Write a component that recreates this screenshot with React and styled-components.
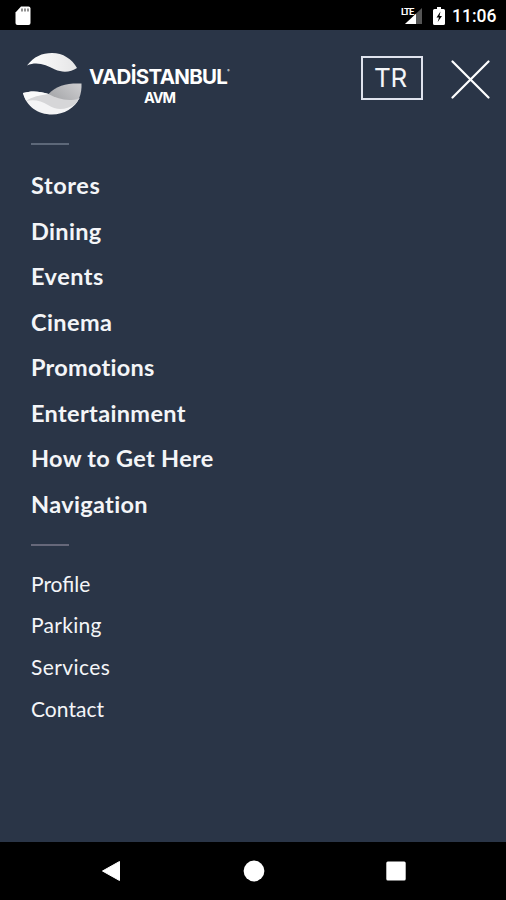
import React from 'react';
import styled, { createGlobalStyle } from 'styled-components';

const GlobalStyle = createGlobalStyle`
    body {
        margin: 0;
        background: #2a3547;
    }

    * {
        box-sizing: border-box;
    }
`;

const Screen = styled.div`
    display: flex;
    flex-direction: column;
    width: 506px;
    height: 900px;
    background: #2a3547;
    color: #f4f5f8;
    font-family: Lato, "Open Sans", sans-serif;
`;

const StatusBar = styled.div`
    display: flex;
    align-items: center;
    height: 30px;
    padding: 1px 9px 0 14px;
    background: #000;
    color: #fff;
`;

const StatusIcons = styled.div`
    display: flex;
    align-items: center;
    gap: 10px;
    margin-left: auto;
`;

const Clock = styled.span`
    width: 45px;
    margin-left: -3px;
    font-family: Roboto, sans-serif;
    font-size: 17.5px;
    font-weight: 500;
    line-height: 28px;
    white-space: nowrap;
`;

const Header = styled.header`
    display: flex;
    align-items: flex-start;
    height: 113px;
    padding: 22px 16px 0 22px;
`;

const Brand = styled.div`
    display: flex;
    align-items: flex-start;
`;

const BrandName = styled.div`
    display: flex;
    flex-direction: column;
    width: 142px;
    margin: 13px 0 0 7px;
    color: #fff;
    font-family: Inter, sans-serif;
    font-weight: 700;
`;

const BrandTitle = styled.span`
    font-size: 20.5px;
    line-height: 24px;
    letter-spacing: -0.7px;
    white-space: nowrap;
`;

const BrandMark = styled.sup`
    font-size: 3.5px;
    line-height: 0;
    vertical-align: 12px;
`;

const BrandSub = styled.span`
    padding-right: 1px;
    font-size: 14.5px;
    line-height: 17px;
    letter-spacing: -1px;
    text-align: center;
`;

const HeaderActions = styled.div`
    display: flex;
    align-items: flex-start;
    gap: 28px;
    margin: 4px 0 0 auto;
`;

const LanguageButton = styled.button`
    display: flex;
    align-items: center;
    justify-content: center;
    width: 62px;
    height: 44px;
    padding: 0 3px 2px 0;
    border: 2px solid #dfe3ee;
    background: none;
    color: #f4f5f8;
    font-family: Inter, sans-serif;
    font-size: 26px;
    letter-spacing: -0.3px;
`;

const CloseButton = styled.button`
    display: flex;
    margin-top: 4px;
    padding: 0;
    border: 0;
    background: none;
`;

const Divider = styled.hr`
    width: 38px;
    height: 2px;
    margin: 0 0 0 31px;
    border: 0;
    background: ${props => props.$color};
`;

const Menu = styled.nav`
    display: flex;
    flex-direction: column;
    align-items: flex-start;
    padding: ${props => props.$padding};
`;

const MainLink = styled.a`
    height: 45.57px;
    font-size: 23.5px;
    font-weight: 700;
    line-height: 45.57px;
    letter-spacing: ${props => props.$spacing}px;
`;

const SubLink = styled.a`
    height: 41.9px;
    font-size: 21px;
    line-height: 41.9px;
    letter-spacing: ${props => props.$spacing}px;
`;

const NavigationBar = styled.footer`
    display: flex;
    align-items: center;
    justify-content: space-between;
    height: 58px;
    margin-top: auto;
    padding: 0 100px 0 101px;
    background: #000;
`;

const mainLinks = [
    { label: 'Stores', spacing: 0.6 },
    { label: 'Dining', spacing: 0.35 },
    { label: 'Events', spacing: 0.5 },
    { label: 'Cinema', spacing: 0.4 },
    { label: 'Promotions', spacing: 0.25 },
    { label: 'Entertainment', spacing: 0.35 },
    { label: 'How to Get Here', spacing: 0.3 },
    { label: 'Navigation', spacing: 0.35 },
];

const subLinks = [
    { label: 'Profile', spacing: 0 },
    { label: 'Parking', spacing: 0.3 },
    { label: 'Services', spacing: 0.4 },
    { label: 'Contact', spacing: 0.05 },
];

const SdCardIcon = () => (
    <svg width="18" height="20" viewBox="0 0 18 20">
        <path d="M7 0.500h7.500a2 2 0 0 1 2 2v14.500a2 2 0 0 1-2 2H3.500a2 2 0 0 1-2-2V6.500z" fill="#fff" />
        <path d="M8 2.500v3M11 2.500v3M14 2.500v3" stroke="#777" strokeWidth="1.6" />
    </svg>
);

const SignalIcon = () => (
    <svg width="22" height="20" viewBox="0 0 22 20">
        <path d="M21 2v16H4z" fill="#555" />
        <path d="M15 7.700V18H4z" fill="#fff" />
        <text x="0" y="8.500" fill="#fff" fontFamily="Roboto, sans-serif" fontSize="9.500" fontWeight="700" letterSpacing="-1">LTE</text>
    </svg>
);

const BatteryIcon = () => (
    <svg width="12" height="20" viewBox="0 0 12 20">
        <path d="M4 1h4v2h2.500q1.500 0 1.500 1.500v13q0 1.500-1.500 1.500h-9q-1.500 0-1.500-1.500v-13q0-1.500 1.500-1.500h2.500z" fill="#fff" />
        <path d="M7.500 5.500L3.500 11.500H6L4.700 16 9 10H6.500z" fill="#000" />
    </svg>
);

const LogoMark = () => (
    <svg width="60" height="64" viewBox="0 0 60 64">
        <defs>
            <linearGradient id="topWave" x1="0" x2="1">
                <stop offset="0" stopColor="#fff" />
                <stop offset="1" stopColor="#e5e5e6" />
            </linearGradient>
            <linearGradient id="rightWave" x1="1" y1="0" x2="0" y2="0.6">
                <stop offset="0" stopColor="#cfcfd1" />
                <stop offset="1" stopColor="#a8a9ac" />
            </linearGradient>
        </defs>
        <path d="M5 13.500C12 4.500 20 1 30 1c11 0 20 6 25 15-6 4-14 5-22 1.500C24 13 15 9 5 13.500z" fill="url(#topWave)" />
        <path d="M1 41C9 38.500 18 39 26.500 42 36 46 47 49 57.500 46 53 56 42 62.500 30 62.500 16 62.500 4 54 1 41z" fill="#f4f4f5" />
        <path d="M4 49c8-2 15-.5 22 4 9 6 18 5 27.500-1l4-6L26.500 42C18 42 10 44 4 49z" fill="#d6d6d8" />
        <path d="M26.500 42C35 33 45 31 59.500 31.500q.5 8-2.500 15C46 50 36 47 26.500 42z" fill="url(#rightWave)" />
        <path d="M1 41C9 38.500 18 39 26.500 42 18 43 10 45 4 48.500z" fill="#fafafa" />
    </svg>
);

const CloseIcon = () => (
    <svg width="39" height="39" viewBox="0 0 39 39">
        <path d="M1.500 1.500l36 36M37.500 1.500l-36 36" stroke="#fff" strokeWidth="2.200" strokeLinecap="round" />
    </svg>
);

const App = () => {
    return (
        <>
            <GlobalStyle />
            <Screen>
                <StatusBar>
                    <SdCardIcon />
                    <StatusIcons>
                        <SignalIcon />
                        <BatteryIcon />
                        <Clock>11:06</Clock>
                    </StatusIcons>
                </StatusBar>

                <Header>
                    <Brand>
                        <LogoMark />
                        <BrandName>
                            <BrandTitle>VADİSTANBUL<BrandMark>®</BrandMark></BrandTitle>
                            <BrandSub>AVM</BrandSub>
                        </BrandName>
                    </Brand>
                    <HeaderActions>
                        <LanguageButton>TR</LanguageButton>
                        <CloseButton aria-label="Close">
                            <CloseIcon />
                        </CloseButton>
                    </HeaderActions>
                </Header>

                <Divider $color="#5d6879" />
                <Menu $padding="18px 31px 16px">
                    {mainLinks.map(({ label, spacing }) => (
                        <MainLink key={label} $spacing={spacing}>{label}</MainLink>
                    ))}
                </Menu>

                <Divider $color="#66687a" />
                <Menu $padding="17px 31px 0">
                    {subLinks.map(({ label, spacing }) => (
                        <SubLink key={label} $spacing={spacing}>{label}</SubLink>
                    ))}
                </Menu>

                <NavigationBar>
                    <svg width="20" height="22" viewBox="0 0 20 22">
                        <path d="M18.500 1.500v19L1.500 11z" fill="#fff" stroke="#fff" strokeLinejoin="round" />
                    </svg>
                    <svg width="22" height="22" viewBox="0 0 22 22">
                        <circle cx="11" cy="11" r="10.400" fill="#fff" />
                    </svg>
                    <svg width="20" height="20" viewBox="0 0 20 20">
                        <rect x="0.300" y="0.500" width="19.400" height="19" rx="1.500" fill="#fff" />
                    </svg>
                </NavigationBar>
            </Screen>
        </>
    );
};

export default App;
